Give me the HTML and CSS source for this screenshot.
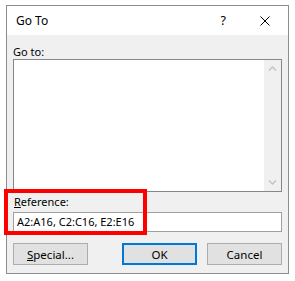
FILE: index.html
```html
<!DOCTYPE html>
<html lang="en">
<head>
  <meta charset="UTF-8">
  <title>Go To</title>
  <link rel="stylesheet" href="styles.css">
</head>
<body>
  <div class="dialog">
    <div class="titlebar">
      <span class="title">Go To</span>
      <span class="help">?</span>
      <svg class="close" width="10" height="10" viewBox="0 0 10 10">
        <path d="M0.5 0.5 L9.5 9.5 M9.5 0.5 L0.5 9.5" stroke="#000" stroke-width="1" fill="none"/>
      </svg>
    </div>
    <div class="content">
      <div class="label">Go to:</div>
      <div class="list">
        <div class="list-items"></div>
        <div class="scrollbar">
          <svg width="17" height="17" viewBox="0 0 17 17">
            <path d="M5 10.5 L8.5 7 L12 10.5" stroke="#c2c2c2" stroke-width="1.4" fill="none"/>
          </svg>
          <svg width="17" height="17" viewBox="0 0 17 17">
            <path d="M5 6.5 L8.5 10 L12 6.5" stroke="#c2c2c2" stroke-width="1.4" fill="none"/>
          </svg>
        </div>
      </div>
      <div class="label ref-label"><u>R</u>eference:</div>
      <div class="input">A2:A16, C2:C16, E2:E16</div>
      <div class="buttons">
        <button class="btn"><u>S</u>pecial...</button>
        <button class="btn btn-default">OK</button>
        <button class="btn">Cancel</button>
      </div>
    </div>
  </div>

  <!-- red callout around the reference field -->
  <div class="highlight"></div>
</body>
</html>
```

FILE: styles.css
```css
body {
  margin: 0;
  background-color: #ffffff;
  color: #000000;
  font-family: "Noto Sans", "Open Sans", sans-serif;
  font-size: 11px;
}

.dialog {
  box-sizing: border-box;
  width: 283px;
  height: 269px;
  margin: 5px 0 0 6px;
  border: 1px solid #8c8c8c;
  display: flex;
  flex-direction: column;
}

.titlebar {
  height: 29px;
  background-color: #ffffff;
  display: flex;
  align-items: center;
  padding-left: 9px;
}

.title {
  font-size: 12px;
  flex: 1;
}

.help {
  font-size: 12.5px;
  margin-right: 34px;
}

.close {
  margin-right: 18px;
}

.content {
  flex: 1;
  background-color: #f0f0f0;
  padding: 9px 6px 8px 6px;
  display: flex;
  flex-direction: column;
}

.label {
  height: 15px;
  line-height: 15px;
}

.ref-label {
  height: 20px;
  line-height: 20px;
  padding-left: 1px;
}

.list {
  box-sizing: border-box;
  height: 133px;
  border: 1px solid #828790;
  background-color: #ffffff;
  display: flex;
}

.list-items {
  flex: 1;
}

.scrollbar {
  width: 17px;
  background-color: #f0f0f0;
  display: flex;
  flex-direction: column;
  justify-content: space-between;
}

.input {
  box-sizing: border-box;
  height: 20px;
  border: 1px solid #a0a0a0;
  background-color: #ffffff;
  padding-left: 3px;
  line-height: 18px;
}

.buttons {
  display: flex;
  margin-top: 11px;
}

.btn {
  box-sizing: border-box;
  width: 75px;
  height: 22px;
  border: 1px solid #adadad;
  background-color: #e1e1e1;
  font-family: inherit;
  font-size: 11.5px;
  color: #000000;
  padding: 0;
}

.btn-default {
  border: 2px solid #0078d7;
  margin-left: auto;
  margin-right: 10px;
}

.highlight {
  position: absolute;
  top: 189px;
  left: 4px;
  width: 143px;
  height: 46px;
  box-sizing: border-box;
  border: 4px solid #ff0000;
}
```
